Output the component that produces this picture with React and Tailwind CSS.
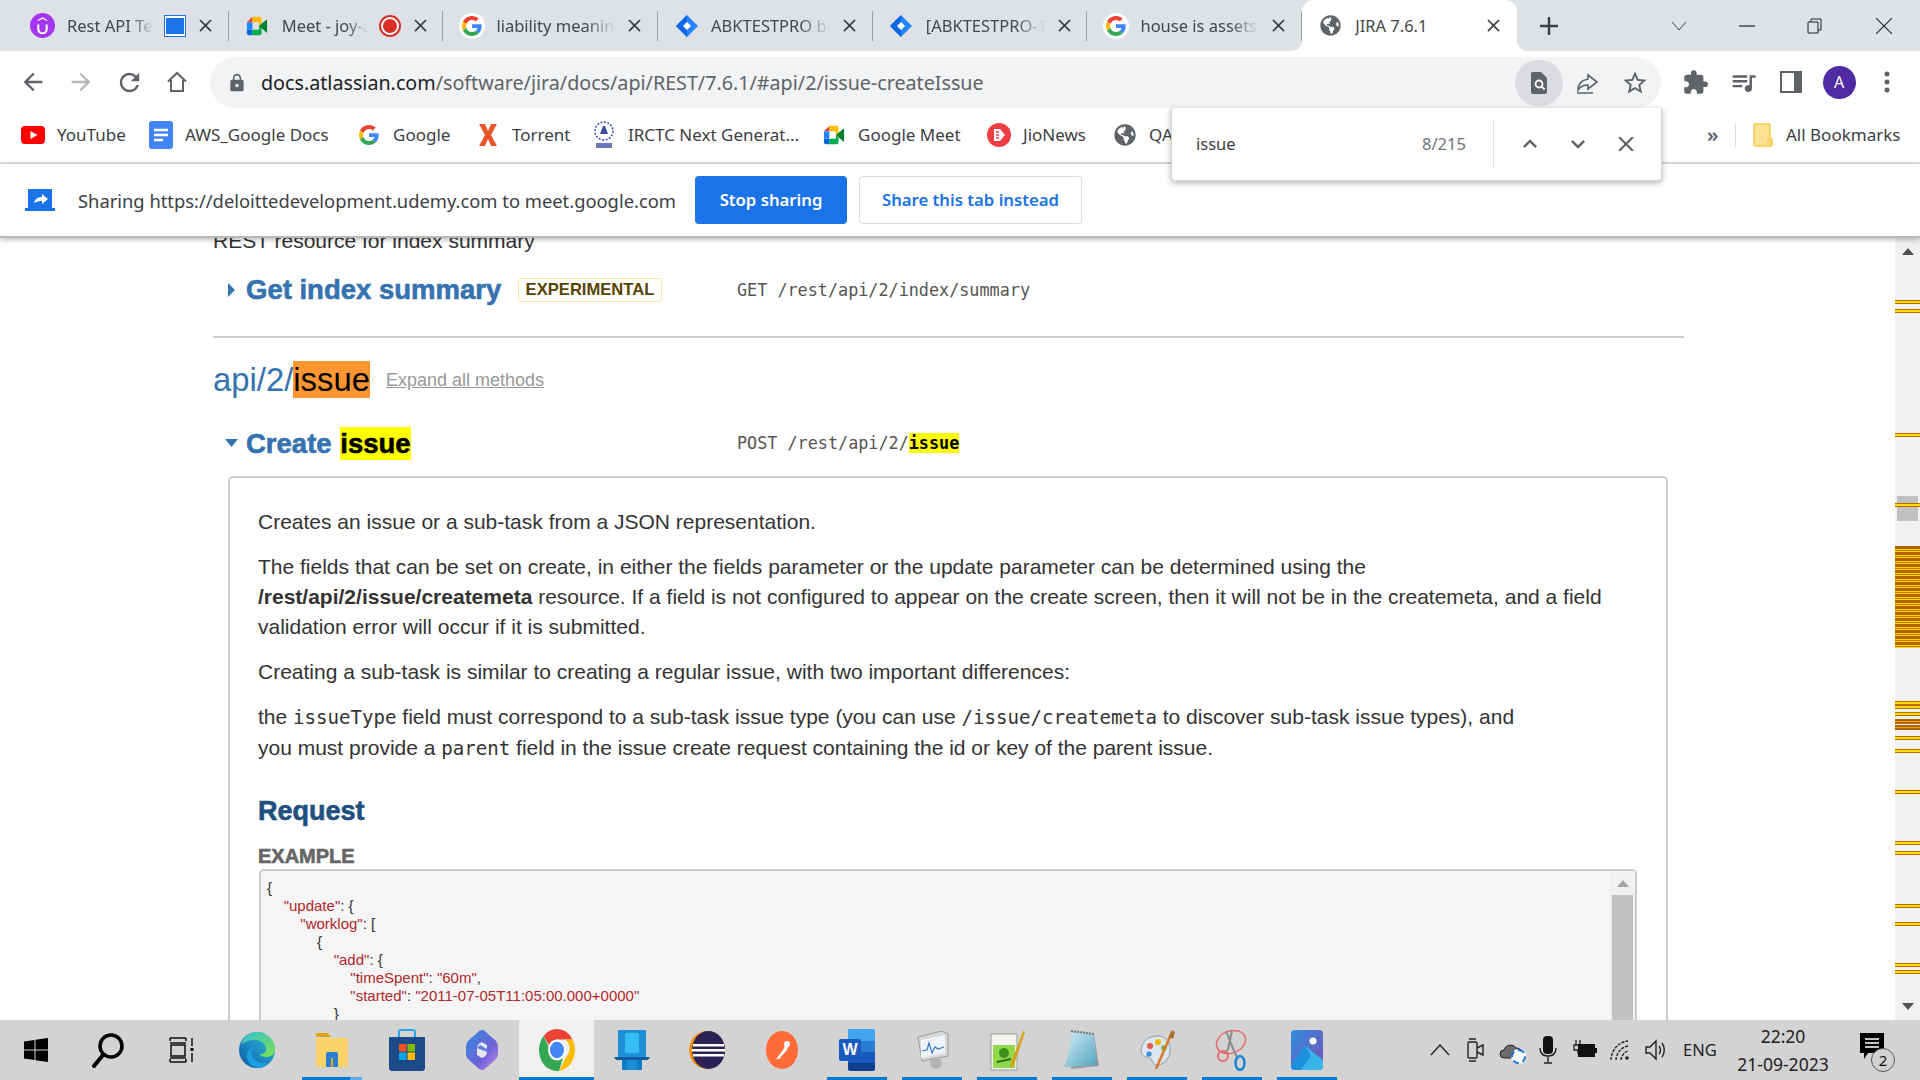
import React from 'react';
import { MdArrowBack, MdArrowForward, MdRefresh, MdLock, MdExtension, MdQueueMusic, MdClose, MdOutlineStarBorder, MdKeyboardArrowUp, MdKeyboardArrowDown } from 'react-icons/md';
import { FaGlobeAmericas } from 'react-icons/fa';

const GoogleG = ({ size = 20 }) => (
    <svg width={size} height={size} viewBox="0 0 48 48">
        <path fill="#EA4335" d="M24 9.5c3.54 0 6.71 1.22 9.21 3.6l6.85-6.85C35.9 2.38 30.47 0 24 0 14.62 0 6.51 5.38 2.56 13.22l7.98 6.19C12.43 13.72 17.74 9.5 24 9.5z" />
        <path fill="#4285F4" d="M46.98 24.55c0-1.57-.15-3.09-.38-4.55H24v9.02h12.94c-.58 2.96-2.26 5.48-4.78 7.18l7.73 6c4.51-4.18 7.09-10.36 7.09-17.65z" />
        <path fill="#FBBC05" d="M10.53 28.59c-.48-1.45-.76-2.99-.76-4.59s.27-3.14.76-4.59l-7.98-6.19C.92 16.46 0 20.12 0 24c0 3.88.92 7.54 2.56 10.78l7.97-6.19z" />
        <path fill="#34A853" d="M24 48c6.48 0 11.93-2.13 15.89-5.81l-7.73-6c-2.15 1.45-4.92 2.3-8.16 2.3-6.26 0-11.57-4.22-13.47-9.91l-7.98 6.19C6.51 42.62 14.62 48 24 48z" />
    </svg>
);
const GoogleTab = () => (
    <span className="flex h-[26px] w-[26px] items-center justify-center rounded-full bg-white"><GoogleG size={20} /></span>
);
const MeetIcon = ({ size = 22 }) => (
    <svg width={size} height={size} viewBox="0 0 24 24">
        <path fill="#ea4335" d="M7 2v6H1z" />
        <path fill="#2684fc" d="M1 8h6v8H1z" />
        <path fill="#0066da" d="M1 16h6v6H3a2 2 0 0 1-2-2z" />
        <path fill="#ffba00" d="M7 2h8a2 2 0 0 1 2 2v5l-3 3V8H7z" />
        <path fill="#00ac47" d="M7 16h7v-4l3 3v5a2 2 0 0 1-2 2H7z" />
        <path fill="#00832d" d="M14 12l9-7.5v15z" />
    </svg>
);
const JiraIcon = () => (
    <svg width="24" height="24" viewBox="0 0 24 24">
        <path fill="#2684ff" d="M12 1l11 11-11 11L1 12z" />
        <path fill="#0b66e4" d="M12 1v7l-4 4 4 4v7L1 12z" />
        <path fill="#fff" d="M12 8l4 4-4 4-4-4z" />
    </svg>
);
const UdemyIcon = () => (
    <svg width="25" height="25" viewBox="0 0 24 24">
        <circle cx="12" cy="12" r="12" fill="#a435f0" />
        <path d="M8 11v4.5a4 4 0 0 0 8 0V11" fill="none" stroke="#fff" strokeWidth="2" />
        <path d="M12 4l4.500 2.600v1.400L12 5.500 7.500 8V6.600z" fill="#fff" />
    </svg>
);
const Globe = ({ size = 20 }) => <FaGlobeAmericas size={size} color="#5f6368" />;
const YouTube = () => (
    <svg width="24" height="24" viewBox="0 0 24 24">
        <rect x="0" y="3" width="24" height="18" rx="4" fill="#f00" />
        <path d="M9.500 8l7 4-7 4z" fill="#fff" />
    </svg>
);
const DocsIcon = () => (
    <svg width="24" height="28" viewBox="0 0 24 28">
        <rect width="24" height="28" rx="3" fill="#4285f4" />
        <path d="M5 9h14M5 14h14M5 19h9" stroke="#fff" strokeWidth="2.600" />
    </svg>
);
const TorrentIcon = () => (
    <svg width="20" height="24" viewBox="0 0 20 24">
        <path fill="#e8552b" d="M1 1h6l3 7 3-7h6l-6 11 6 11h-6l-3-7-3 7H1l6-11z" />
    </svg>
);
const IrctcIcon = () => (
    <svg width="22" height="32" viewBox="0 0 22 32">
        <circle cx="11" cy="12" r="9" fill="none" stroke="#3b4ea0" strokeWidth="1.500" strokeDasharray="2 1.500" />
        <path d="M7 15l3-8 2 0 3 8z" fill="#3b4ea0" />
        <rect x="3" y="24" width="16" height="5" fill="#6b76b8" />
    </svg>
);
const JioNews = () => (
    <svg width="24" height="24" viewBox="0 0 24 24">
        <circle cx="12" cy="12" r="12" fill="#ef3e42" />
        <path d="M7 6h6l5 6-5 6H7z" fill="#fff" />
        <path d="M9 9h3M9 12h3M9 15h3" stroke="#ef3e42" strokeWidth="1.300" />
    </svg>
);
const Folder = () => (
    <svg width="20" height="24" viewBox="0 0 20 24">
        <path d="M1 2a1 1 0 0 1 1-1h14a1 1 0 0 1 1 1v14h2v6a1 1 0 0 1-1 1H2a1 1 0 0 1-1-1z" fill="#fde293" stroke="#f7cb4d" strokeWidth="1.500" />
        <path d="M15 23v-6a1 1 0 0 1 3 0v6" fill="none" stroke="#f7cb4d" strokeWidth="1.200" />
    </svg>
);

const tabs = [
    { title: 'Rest API Testing with Postman', icon: <UdemyIcon />, w: 'w-[86px]', extra: <span className="flex h-[22px] w-[23px] items-center justify-center border border-[#1a73e8] bg-white"><span className="h-[16px] w-[18px] bg-[#1a73e8]" /></span> },
    { title: 'Meet - joy-abc', icon: <MeetIcon />, w: 'w-[86px]', extra: <span className="flex h-[22px] w-[22px] items-center justify-center rounded-full border-2 border-[#d93025] bg-white"><span className="h-[14px] w-[14px] rounded-full bg-[#d93025]" /></span> },
    { title: 'liability meaning in accounting', icon: <GoogleTab />, w: 'w-[119px]' },
    { title: 'ABKTESTPRO board - Agile', icon: <JiraIcon />, w: 'w-[119px]' },
    { title: '[ABKTESTPRO-1] Create', icon: <JiraIcon />, w: 'w-[119px]' },
    { title: 'house is assets or liabilities', icon: <GoogleTab />, w: 'w-[119px]' },
    { title: 'JIRA 7.6.1', icon: <Globe size={21} />, w: 'w-[119px]', active: true },
];

function Tab({ tab }) {
    return (
        <div className={`relative flex h-[51px] w-[214.7px] shrink-0 items-center ${tab.active ? 'rounded-t-[12px] bg-white' : ''}`}>
            {tab.active && (
                <>
                    <svg className="absolute bottom-0 left-[-10px]" width="10" height="10" viewBox="0 0 10 10"><path d="M10 0v10H0a10 10 0 0 0 10-10z" fill="#fff" /></svg>
                    <svg className="absolute bottom-0 right-[-10px]" width="10" height="10" viewBox="0 0 10 10"><path d="M0 0v10h10A10 10 0 0 1 0 0z" fill="#fff" /></svg>
                </>
            )}
            <div className="flex w-[53px] shrink-0 justify-center pl-[4px]">{tab.icon}</div>
            <div className={`${tab.w} overflow-hidden whitespace-nowrap pt-[1px] text-[16.5px] text-[#45474a] ${tab.active ? '' : '[mask-image:linear-gradient(to_right,black_75%,transparent)]'}`}>{tab.title}</div>
            {tab.extra && <div className="ml-[11px] flex w-[22px] justify-center">{tab.extra}</div>}
            <MdClose size={21} color="#3c4043" className="absolute left-[181px] top-[15px]" />
            {!tab.active && <div className="absolute right-0 top-[11px] h-[30px] w-px bg-[#9aa0a6]" />}
        </div>
    );
}

const bookmarks = [
    { label: 'YouTube', icon: <YouTube />, w: 'w-[128px]' },
    { label: 'AWS_Google Docs', icon: <DocsIcon />, w: 'w-[208px]' },
    { label: 'Google', icon: <GoogleG size={20} />, w: 'w-[119px]' },
    { label: 'Torrent', icon: <TorrentIcon />, w: 'w-[116px]' },
    { label: 'IRCTC Next Generat...', icon: <IrctcIcon />, w: 'w-[230px]' },
    { label: 'Google Meet', icon: <MeetIcon />, w: 'w-[165px]' },
    { label: 'JioNews', icon: <JioNews />, w: 'w-[126px]' },
    { label: 'QA', icon: <Globe size={22} />, w: 'w-[60px]' },
];

function ToolbarIcon({ children, className = '' }) {
    return <div className={`flex h-[48px] w-[48px] items-center justify-center ${className}`}>{children}</div>;
}

function Toolbar() {
    return (
        <div className="flex h-[57px] items-end bg-white pl-[9px]">
            <div className="mb-[2px] flex">
                <ToolbarIcon><MdArrowBack size={28} color="#5f6368" /></ToolbarIcon>
                <ToolbarIcon><MdArrowForward size={28} color="#b5b7ba" /></ToolbarIcon>
                <ToolbarIcon><MdRefresh size={29} color="#5f6368" /></ToolbarIcon>
                <ToolbarIcon>
                    <svg width="24" height="24" viewBox="0 0 24 24" fill="none" stroke="#5f6368" strokeWidth="2"><path d="M3 11.500L12 3l9 8.500M6 10v11h12V10" /></svg>
                </ToolbarIcon>
            </div>
            <div className="ml-[9px] flex h-[51px] w-[1451px] items-center rounded-full bg-[#f1f3f4]">
                <MdLock size={20} color="#5f6368" className="ml-[17px]" />
                <div className="ml-[14px] text-[19.7px] text-[#5f6368]"><span className="text-[#202124]">docs.atlassian.com</span>/software/jira/docs/api/REST/7.6.1/#api/2/issue-createIssue</div>
                <div className="ml-auto mr-[2px] flex items-center">
                    <div className="flex h-[46px] w-[48px] items-center justify-center rounded-full bg-[#dadce0]">
                        <svg width="18" height="22" viewBox="0 0 18 22"><path d="M1 2a2 2 0 0 1 2-2h8l6 6v14a2 2 0 0 1-2 2H3a2 2 0 0 1-2-2z" fill="#5f6368" /><circle cx="9" cy="12" r="3.500" fill="none" stroke="#fff" strokeWidth="1.800" /><path d="M11.500 14.500l3 3" stroke="#fff" strokeWidth="1.800" /></svg>
                    </div>
                    <ToolbarIcon>
                        <svg width="24" height="24" viewBox="0 0 24 24" fill="none" stroke="#5f6368" strokeWidth="1.600"><path d="M13 4l9 7-9 7v-4c-5 0-8 2-10 5 0-6 4-10 10-11zM2 22h16" /></svg>
                    </ToolbarIcon>
                    <ToolbarIcon><MdOutlineStarBorder size={28} color="#5f6368" /></ToolbarIcon>
                </div>
            </div>
            <div className="mb-[2px] ml-[10px] flex items-center">
                <ToolbarIcon><MdExtension size={27} color="#5f6368" /></ToolbarIcon>
                <ToolbarIcon><MdQueueMusic size={29} color="#5f6368" /></ToolbarIcon>
                <ToolbarIcon>
                    <svg width="22" height="22" viewBox="0 0 22 22"><path d="M1 1h20v20H1z" fill="none" stroke="#5f6368" strokeWidth="2" /><path d="M14 1h7v20h-7z" fill="#5f6368" /></svg>
                </ToolbarIcon>
                <ToolbarIcon>
                    <div className="flex h-[33px] w-[33px] items-center justify-center rounded-full bg-[#4f2ba3] text-[16px] text-white">A</div>
                </ToolbarIcon>
                <ToolbarIcon>
                    <svg width="6" height="22" viewBox="0 0 6 22" fill="#5f6368"><circle cx="3" cy="3" r="2.500" /><circle cx="3" cy="11" r="2.500" /><circle cx="3" cy="19" r="2.500" /></svg>
                </ToolbarIcon>
            </div>
        </div>
    );
}

function Bookmarks() {
    return (
        <div className="flex h-[56px] items-center border-b-2 border-[#dadce0] bg-white pl-[21px] text-[17px] text-[#3c4043]">
            {bookmarks.map((b) => (
                <div key={b.label} className={`flex ${b.w} shrink-0 items-center`}>
                    <div className="flex w-[24px] justify-center">{b.icon}</div>
                    <span className="ml-[12px] whitespace-nowrap">{b.label}</span>
                </div>
            ))}
            <span className="ml-[534px] w-[22px] text-[20px] font-semibold text-[#5f6368]">»</span>
            <div className="ml-[6px] h-[24px] w-px bg-[#dadce0]" />
            <div className="ml-[17px]"><Folder /></div>
            <span className="ml-[13px] whitespace-nowrap">All Bookmarks</span>
        </div>
    );
}

function FindBar() {
    return (
        <div className="absolute left-[1171px] top-[108px] z-20 flex h-[73px] w-[491px] items-center rounded-b-[4px] border border-t-0 border-[#d5d5d5] bg-white text-[16.5px] shadow-[0_2px_6px_rgba(0,0,0,0.3)]">
            <span className="ml-[24px] w-[226px] text-[#3c4043]">issue</span>
            <span className="w-[47px] text-[#70757a]">8/215</span>
            <div className="ml-[24px] h-[48px] w-px bg-[#e3e3e3]" />
            <div className="ml-[12px] flex">
                <ToolbarIcon><MdKeyboardArrowUp size={28} color="#5f6368" /></ToolbarIcon>
                <ToolbarIcon><MdKeyboardArrowDown size={28} color="#5f6368" /></ToolbarIcon>
                <ToolbarIcon><MdClose size={26} color="#5f6368" /></ToolbarIcon>
            </div>
        </div>
    );
}

function Infobar() {
    return (
        <div className="z-10 flex h-[74px] items-center border-b-2 border-[#b9b9b9] bg-white pl-[25px] text-[18.35px] shadow-[0_2px_5px_rgba(0,0,0,0.25)]">
            <svg width="30" height="22" viewBox="0 0 30 22">
                <path d="M3 0h24v19H3z" fill="#1a73e8" />
                <path d="M0 19h30v3H0z" fill="#1a73e8" />
                <path d="M9 14c1-4 4-6 8-6V5l6 5-6 5v-3c-3 0-5 .500-8 2z" fill="#fff" />
            </svg>
            <span className="ml-[23px] w-[617px] whitespace-nowrap pt-[1px] text-[#3c4043]">Sharing https://deloittedevelopment.udemy.com to meet.google.com</span>
            <div className="flex h-[48px] w-[152px] items-center justify-center rounded-[4px] bg-[#1a73e8] text-[16.7px] font-semibold text-white">Stop sharing</div>
            <div className="ml-[12px] flex h-[48px] w-[223px] items-center justify-center rounded-[4px] border border-[#dadce0] text-[16.7px] font-semibold text-[#1a73e8]">Share this tab instead</div>
        </div>
    );
}

const ticks = [299, 308, 432, 502, 700, 704, 711, 735, 748, 789, 840, 850, 903, 921, 962, 969];
const heavyTicks = [718, 724];

function PageScrollbar() {
    return (
        <div className="relative flex w-[25px] shrink-0 flex-col items-center justify-between bg-[#f1f1f1] pb-[10px] pt-[10px]">
            <svg width="12" height="7" viewBox="0 0 12 7"><path d="M6 0l6 7H0z" fill="#505050" /></svg>
            <svg width="12" height="7" viewBox="0 0 12 7"><path d="M0 0h12L6 7z" fill="#505050" /></svg>
            <div className="absolute left-[2px] top-[258px] h-[25px] w-[21px] bg-[#c1c1c1]" />
            {ticks.map((y) => (
                <div key={y} className="absolute left-0 h-[4px] w-full border-y border-[#bd6a00] bg-[#ffdd00]" style={{ top: y - 237 }} />
            ))}
            {heavyTicks.map((y) => (
                <div key={y} className="absolute left-0 h-[5px] w-full border-y-2 border-[#b36200] bg-[#e8a800]" style={{ top: y - 237 }} />
            ))}
            <div className="absolute left-0 top-[308px] h-[102px] w-full bg-[repeating-linear-gradient(to_bottom,#b36200_0px,#b36200_3px,#ffd800_3px,#ffd800_4px,#c87400_4px,#c87400_5px,#ffd800_5px,#ffd800_6px)]" />
        </div>
    );
}

const Str = ({ children }) => <span className="text-[#b0282c]">{children}</span>;
const Mono = ({ children }) => <code className="font-['DejaVu_Sans_Mono',monospace] text-[19.1px] font-normal text-[#333]">{children}</code>;

function CodeBox() {
    return (
        <div className="ml-px flex h-[300px] w-[1378px] rounded-[5px] border-2 border-[#cccccc] bg-[#f5f5f5]">
            <pre className="flex-1 pl-[6px] pt-[8px] font-['Liberation_Sans',sans-serif] text-[15px] leading-[18px] text-[#333]">
                {'{\n    '}<Str>"update"</Str>{': {\n        '}<Str>"worklog"</Str>{': [\n            {\n                '}<Str>"add"</Str>{': {\n                    '}<Str>"timeSpent"</Str>{': '}<Str>"60m"</Str>{',\n                    '}<Str>"started"</Str>{': '}<Str>"2011-07-05T11:05:00.000+0000"</Str>{'\n                }'}
            </pre>
            <div className="flex w-[25px] flex-col items-center bg-[#f1f1f1]">
                <svg className="mt-[9px]" width="12" height="7" viewBox="0 0 12 7"><path d="M6 0l6 7H0z" fill="#a3a3a3" /></svg>
                <div className="mt-[8px] h-[260px] w-[21px] bg-[#c1c1c1]" />
            </div>
        </div>
    );
}

function Content() {
    return (
        <div className="min-w-0 flex-1 overflow-hidden">
            <div className="-mt-[12px] ml-[213px] w-[1471px] font-['Liberation_Sans',sans-serif] text-[21px] leading-[30px] text-[#333]">
                <div className="h-[30px]">REST resource for index summary</div>
                <div className="mt-[17px] flex h-[34px] items-center">
                    <svg className="ml-[14px] w-[9px]" width="9" height="14" viewBox="0 0 9 14"><path d="M1 0l7 7-7 7z" fill="#3572b0" /></svg>
                    <span className="ml-[10px] w-[272px] text-[27.5px] font-bold text-[#3572b0] [-webkit-text-stroke:0.6px]">Get index summary</span>
                    <span className="flex h-[24px] w-[144px] items-center justify-center rounded-[3px] border border-[#ffe7a3] text-[16.6px] font-bold leading-none text-[#594300]">EXPERIMENTAL</span>
                    <span className="ml-[75px] font-['DejaVu_Sans_Mono',monospace] text-[16.8px] text-[#555]">GET /rest/api/2/index/summary</span>
                </div>
                <div className="mt-[29px] h-[2px] bg-[#cccccc]" />
                <div className="mt-[23px] flex h-[38px] items-center">
                    <span className="text-[32.85px] leading-[38px] text-[#3572b0]">api/2/<span className="bg-[#ff9632] text-black">issue</span></span>
                    <span className="ml-[16px] text-[18px] text-[#999] underline">Expand all methods</span>
                </div>
                <div className="mt-[27px] flex h-[34px] items-center">
                    <svg className="ml-[12px]" width="13" height="8" viewBox="0 0 13 8"><path d="M0 0h13L6.500 8z" fill="#3572b0" /></svg>
                    <span className="ml-[8px] w-[491px] whitespace-pre text-[27.5px] font-bold leading-[33px] text-[#3572b0] [-webkit-text-stroke:0.6px]">Create <span className="ml-[1px] inline-block h-[33px] bg-[#ffff00] text-black">issue</span></span>
                    <span className="font-['DejaVu_Sans_Mono',monospace] text-[16.8px] text-[#555]">POST /rest/api/2/<span className="bg-[#ffff00] font-bold text-black">issue</span></span>
                </div>
                <div className="ml-[15px] mt-[16px] h-[700px] w-[1440px] rounded-t-[5px] border-2 border-[#cccccc] pl-[28px] pt-[29px]">
                    <p>Creates an issue or a sub-task from a JSON representation.</p>
                    <p className="mt-[15px] w-[1360px]">The fields that can be set on create, in either the fields parameter or the update parameter can be determined using the <b>/rest/api/2/issue/createmeta</b> resource. If a field is not configured to appear on the create screen, then it will not be in the createmeta, and a field validation error will occur if it is submitted.</p>
                    <p className="mt-[15px]">Creating a sub-task is similar to creating a regular issue, with two important differences:</p>
                    <p className="mt-[15px] w-[1275px]">the <Mono>issueType</Mono> field must correspond to a sub-task issue type (you can use <Mono>/issue/createmeta</Mono> to discover sub-task issue types), and you must provide a <Mono>parent</Mono> field in the issue create request containing the id or key of the parent issue.</p>
                    <div className="mt-[30px] h-[34px] text-[27px] font-bold leading-[34px] text-[#205081] [-webkit-text-stroke:0.6px]">Request</div>
                    <div className="mt-[13px] h-[28px] text-[20px] font-bold leading-[30px] text-[#666] [-webkit-text-stroke:0.6px]">EXAMPLE</div>
                    <CodeBox />
                </div>
            </div>
        </div>
    );
}

/* taskbar icons */
const Bar = ({ children, on, active, half }) => (
    <div className={`relative flex h-[60px] w-[75px] shrink-0 items-center justify-center ${active ? 'bg-[#f0f0f0]' : ''}`}>
        {children}
        {on && <div className={`absolute bottom-0 h-[3px] ${active ? 'left-0 w-full' : 'left-[8px] w-[60px]'} bg-[#0078d4]`} />}
        {half && <div className="absolute bottom-0 left-[56px] h-[3px] w-[12px] bg-[#5ea9e6]" />}
    </div>
);

const WinLogo = () => (
    <svg width="24" height="24" viewBox="0 0 24 24" fill="#000"><path d="M0 3.500l10.500-1.500v9.500H0zM11.500 1.800L24 0v11.500H11.500zM0 12.500h10.500V22L0 20.500zM11.500 12.500H24V24l-12.500-1.800z" /></svg>
);
const SearchIco = () => (
    <svg width="34" height="36" viewBox="0 0 34 36" fill="none" stroke="#000" strokeWidth="3.500"><circle cx="20" cy="14" r="11" /><path d="M12 23L3 34" strokeWidth="4" strokeLinecap="round" /></svg>
);
const TaskView = () => (
    <svg width="26" height="26" viewBox="0 0 26 26" fill="none" stroke="#111" strokeWidth="1.500"><path d="M1 1h16M1 25h16M1 6h16M1 21h16M2 8v11h14V8zM1 1v3M17 1v3M1 25v-3M17 25v-3M23 1v8M23 16v9" /><rect x="21.500" y="11" width="3" height="3" fill="#111" stroke="none" /></svg>
);
const Edge = () => (
    <svg width="36" height="36" viewBox="0 0 36 36">
        <defs>
            <linearGradient id="edge1" x1="0" y1="1" x2="1" y2="0"><stop offset="0" stopColor="#0c59a4" /><stop offset="1" stopColor="#2fc2df" /></linearGradient>
            <linearGradient id="edge2" x1="0" y1="0" x2="1" y2="1"><stop offset="0" stopColor="#36c1d8" /><stop offset="1" stopColor="#7ee04f" /></linearGradient>
        </defs>
        <circle cx="18" cy="18" r="18" fill="url(#edge1)" />
        <path d="M2 13C5 4 12 0 18 0c10 0 18 8 18 17 0 6-5 8-9 8-3 0-6-1-6-3 4 0 6-2 6-5 0-5-5-9-11-9C10 8 4 10 2 13z" fill="url(#edge2)" />
        <path d="M21 36c-9 0-14-7-13-14 1-4 4-7 8-8-3 3-4 6-3 10 2 5 8 8 15 7-2 3-4 5-7 5z" fill="#1b9de2" />
    </svg>
);
const Explorer = () => (
    <svg width="32" height="34" viewBox="0 0 32 34">
        <path d="M0 2a2 2 0 0 1 2-2h10l3 4h-15z" fill="#e0a60e" />
        <path d="M0 5h32v27a2 2 0 0 1-2 2H2a2 2 0 0 1-2-2z" fill="#fcd368" />
        <path d="M10 34V21a2 2 0 0 1 2-2h8a2 2 0 0 1 2 2v13h-5v-9h-2v9z" fill="#2a7fcf" />
        <rect x="15" y="25" width="2" height="9" fill="#e5a910" />
    </svg>
);
const Store = () => (
    <svg width="36" height="42" viewBox="0 0 36 42">
        <path d="M10 8V3a2 2 0 0 1 2-2h12a2 2 0 0 1 2 2v5" fill="none" stroke="#2aa5e8" strokeWidth="2" />
        <path d="M0 8h36v31a3 3 0 0 1-3 3H3a3 3 0 0 1-3-3z" fill="#1b4a86" />
        <path d="M10 15h7.500v7.500H10z" fill="#f25022" /><path d="M18.500 15H26v7.500h-7.500z" fill="#7fba00" />
        <path d="M10 23.500h7.500V31H10z" fill="#00a4ef" /><path d="M18.500 23.500H26V31h-7.500z" fill="#ffb900" />
    </svg>
);
const Copilot = () => (
    <svg width="32" height="40" viewBox="0 0 32 40">
        <defs>
            <linearGradient id="cop1" x1="0" y1="0" x2="1" y2="1"><stop offset="0" stopColor="#2f8be0" /><stop offset="0.6" stopColor="#6d62d8" /><stop offset="1" stopColor="#c48be8" /></linearGradient>
        </defs>
        <path d="M16 0c2 0 3 1 5 3l8 7c2 2 3 4 3 7v6c0 3-1 5-3 7l-8 7c-2 2-3 3-5 3s-3-1-5-3l-8-7c-2-2-3-4-3-7v-6c0-3 1-5 3-7l8-7c2-2 3-3 5-3z" fill="url(#cop1)" />
        <path d="M11 18c0-3 2-5 5-6l5 3v7c0 3-2 5-5 6l-5-3z" fill="#e6e6f2" />
        <path d="M11 18l10 4v-3l-7-4z" fill="#5a7fd8" />
    </svg>
);
const Chrome = () => (
    <svg width="36" height="42" viewBox="0 0 36 36" preserveAspectRatio="none">
        <path d="M18 0a18 18 0 0 1 15.600 9H18a9 9 0 0 0-8 5L4.600 6A18 18 0 0 1 18 0z" fill="#ea4335" />
        <path d="M33.600 9A18 18 0 0 1 20 35.900L27 24a9 9 0 0 0-1-15z" fill="#fbbc04" />
        <path d="M20 35.900A18 18 0 0 1 4.600 6L11 17.500A9 9 0 0 0 24 25z" fill="#34a853" />
        <circle cx="18" cy="18" r="9" fill="#fff" /><circle cx="18" cy="18" r="7" fill="#4285f4" />
    </svg>
);
const BlueApp = () => (
    <svg width="36" height="40" viewBox="0 0 36 40">
        <path d="M4 0h28v28H4z" fill="#1c8fd8" />
        <path d="M11 5a2 2 0 0 1 2-2h10a2 2 0 0 1 2 2v18H11z" fill="#35bdf2" />
        <path d="M0 27h36l-2 3H2z" fill="#0f5f9e" />
        <path d="M8 30h20v10H8z" fill="#0f7cc4" />
        <path d="M13 30h10v10H13z" fill="#1c8fd8" />
    </svg>
);
const Eclipse = () => (
    <svg width="36" height="38" viewBox="0 0 36 38">
        <ellipse cx="18" cy="19" rx="18" ry="19" fill="#f29111" />
        <ellipse cx="19.500" cy="19" rx="16.500" ry="19" fill="#2c2255" />
        <path d="M4 13h31v2.500H4zM3 18h33v2.500H3zM4 23h31v2.500H4z" fill="#fff" />
    </svg>
);
const Postman = () => (
    <svg width="32" height="38" viewBox="0 0 32 38">
        <ellipse cx="16" cy="19" rx="16" ry="19" fill="#ff6c37" />
        <path d="M10 28l7-9 3-6 3 1-2 5-8 9z" fill="#fff" />
        <circle cx="21" cy="13" r="3" fill="#fff" />
    </svg>
);
const Word = () => (
    <svg width="36" height="42" viewBox="0 0 36 42">
        <path d="M9 0h25a2 2 0 0 1 2 2v10H9z" fill="#41a5ee" />
        <path d="M9 12h27v11H9z" fill="#2b7cd3" />
        <path d="M9 23h27v11H9z" fill="#185abd" />
        <path d="M9 34h27v6a2 2 0 0 1-2 2H11a2 2 0 0 1-2-2z" fill="#103f91" />
        <rect x="0" y="10" width="22" height="22" rx="2" fill="#185abd" />
        <text x="11" y="26" textAnchor="middle" fill="#fff" fontFamily="Liberation Sans" fontWeight="700" fontSize="16">W</text>
    </svg>
);
const Perfmon = () => (
    <svg width="36" height="38" viewBox="0 0 36 38">
        <path d="M4 6l24-6 6 3v22L8 30z" fill="#d9d9d9" stroke="#9a9a9a" />
        <path d="M7 9l24-5v18L7 27z" fill="#eef4fa" />
        <path d="M8 20l5-1 2-7 3 10 3-6 3 2 6-2" fill="none" stroke="#3478c0" strokeWidth="1.200" />
        <circle cx="22" cy="32" r="6" fill="#b5b5b5" />
    </svg>
);
const NotepadPP = () => (
    <svg width="36" height="42" viewBox="0 0 36 42">
        <path d="M2 5h26v36H2z" fill="#f5f5ef" stroke="#999" />
        <path d="M4 16h22v23H4z" fill="#8fd94a" />
        <circle cx="15" cy="24" r="5" fill="#3f8f1d" /><path d="M8 33l14-3" stroke="#2e6e14" strokeWidth="2" />
        <path d="M22 34L34 2l2 1-11 33-4 3z" fill="#d9a21b" />
    </svg>
);
const Notepad = () => (
    <svg width="36" height="40" viewBox="0 0 36 40">
        <defs><linearGradient id="npad" x1="0" y1="0" x2="1" y2="1"><stop offset="0" stopColor="#d5eef7" /><stop offset="1" stopColor="#4fa3bd" /></linearGradient></defs>
        <path d="M8 2l22 2 5 32-28 3c1-10 3-28 1-37z" fill="#9a9a9a" />
        <path d="M7 2l23 2 3 31L0 37C5 26 8 12 7 2z" fill="url(#npad)" />
        <path d="M7 1l23 3" stroke="#777" strokeWidth="2" strokeDasharray="2 1" />
    </svg>
);
const Paint = () => (
    <svg width="36" height="42" viewBox="0 0 36 42">
        <path d="M2 22C2 12 11 6 20 7c8 1 12 8 11 16-1 7-6 13-13 13-5 0-4-5-7-7-3-2-9 0-9-7z" fill="#dce4ec" stroke="#8a9aa8" />
        <circle cx="11" cy="17" r="3" fill="#e2574c" /><circle cx="19" cy="13" r="3" fill="#f4b400" /><circle cx="25" cy="19" r="2.800" fill="#6bb64a" /><circle cx="10" cy="25" r="2.600" fill="#3b8de0" />
        <path d="M33 3L17 40" stroke="#d97a2b" strokeWidth="2.500" />
        <path d="M30 8l3-7 3 2-2 7z" fill="#a5713a" />
    </svg>
);
const Snip = () => (
    <svg width="36" height="42" viewBox="0 0 36 42" fill="none">
        <ellipse cx="17" cy="13" rx="15" ry="11" stroke="#e86a6a" strokeWidth="1.500" transform="rotate(-20 17 13)" />
        <path d="M12 2l8 20 4 8M18 2l-4 18-3 4" stroke="#8a8a8a" strokeWidth="2" />
        <circle cx="9" cy="27" r="5" stroke="#e86a6a" strokeWidth="2" />
        <ellipse cx="26" cy="34" rx="4.500" ry="7" stroke="#1b88d4" strokeWidth="2.500" />
    </svg>
);
const Photos = () => (
    <svg width="32" height="40" viewBox="0 0 32 40">
        <defs><linearGradient id="ph1" x1="0" y1="0" x2="1" y2="1"><stop offset="0" stopColor="#2f8fe0" /><stop offset="1" stopColor="#7a4fb5" /></linearGradient></defs>
        <rect width="32" height="40" rx="4" fill="url(#ph1)" />
        <path d="M0 36l14-20 18 14v6a4 4 0 0 1-4 4H4a4 4 0 0 1-4-4z" fill="#38b6ea" />
        <path d="M0 36l14-20 6 10-10 14H4a4 4 0 0 1-4-4z" fill="#1f8fe0" />
        <circle cx="22" cy="11" r="3.500" fill="#fff" />
    </svg>
);

function Tray() {
    const s = { fill: 'none', stroke: '#222', strokeWidth: 1.4 };
    return (
        <div className="flex items-center">
            <div className="flex w-[36px] justify-center"><svg width="20" height="12" viewBox="0 0 20 12" {...s}><path d="M1 11l9-10 9 10" /></svg></div>
            <div className="flex w-[36px] justify-center"><svg width="18" height="24" viewBox="0 0 18 24" {...s}><rect x="1" y="4" width="9" height="16" rx="1" /><path d="M10 10l6-3v10l-6-3M2 1h7M2 23h7" /></svg></div>
            <div className="relative flex w-[36px] justify-center">
                <svg width="26" height="20" viewBox="0 0 26 20"><path d="M5 18a4 4 0 0 1 0-8c1-5 9-7 12-2 4 0 7 3 6 7l-1 3z" fill="#6a6a6a" stroke="#222" /></svg>
                <span className="absolute left-[17px] top-[9px] h-[15px] w-[15px] rounded-full border-2 border-dashed border-[#1a73e8] bg-white" />
            </div>
            <div className="flex w-[36px] justify-center"><svg width="18" height="28" viewBox="0 0 18 28"><rect x="4" y="0" width="10" height="18" rx="4" fill="#111" /><path d="M1 12c0 5 3 8 8 8s8-3 8-8M9 20v6M5 27h8" fill="none" stroke="#222" strokeWidth="1.400" /></svg></div>
            <div className="flex w-[36px] justify-center"><svg width="26" height="22" viewBox="0 0 26 22"><path d="M5 1v5M9 1v5M3 6h8v5H3zM7 11v4" fill="none" stroke="#222" strokeWidth="1.300" /><rect x="7" y="5" width="17" height="13" fill="#111" /><rect x="24" y="9" width="2" height="5" fill="#111" /></svg></div>
            <div className="flex w-[36px] justify-center"><svg width="24" height="24" viewBox="0 0 24 24" {...s}><path d="M3 22c0-9 7-18 17-19M8 22c0-6 5-13 12-14M13 22c0-3 3-8 7-9" strokeDasharray="3 1.200" /><circle cx="19" cy="20" r="1.800" fill="#222" stroke="none" /></svg></div>
            <div className="flex w-[36px] justify-center"><svg width="24" height="24" viewBox="0 0 24 24" {...s}><path d="M2 9h4l6-6v18l-6-6H2zM15 8c2 2 2 6 0 8M18 5c3 4 3 10 0 14" /></svg></div>
            <span className="ml-[9px] w-[36px] text-[16.5px] text-[#222]">ENG</span>
            <div className="ml-[14px] flex w-[100px] flex-col items-center text-[17.5px] leading-[28px] text-[#222]">
                <span>22:20</span>
                <span>21-09-2023</span>
            </div>
            <div className="relative ml-[27px] mr-[36px] h-[34px] w-[24px]">
                <svg width="24" height="28" viewBox="0 0 24 28"><path d="M0 0h24v20H8l-4 6v-6H0z" fill="#000" /><path d="M5 6h14M5 10h14M5 14h14" stroke="#fff" strokeWidth="1.300" /></svg>
                <span className="absolute left-[11px] top-[15px] flex h-[24px] w-[24px] items-center justify-center rounded-full border border-[#555] bg-[#d3d2d3] text-[15px] text-[#111]">2</span>
            </div>
        </div>
    );
}

function Taskbar() {
    return (
        <div className="flex h-[60px] shrink-0 items-center justify-between bg-[#d4d3d4]">
            <div className="flex items-center">
                <div className="flex h-[60px] w-[72px] items-center justify-center"><WinLogo /></div>
                <div className="flex h-[60px] w-[72px] items-center justify-center"><SearchIco /></div>
                <div className="flex h-[60px] w-[75px] items-center justify-center"><TaskView /></div>
                <Bar><Edge /></Bar>
                <Bar on half><Explorer /></Bar>
                <Bar><Store /></Bar>
                <Bar><Copilot /></Bar>
                <Bar on active><Chrome /></Bar>
                <Bar><BlueApp /></Bar>
                <Bar><Eclipse /></Bar>
                <Bar><Postman /></Bar>
                <Bar on><Word /></Bar>
                <Bar on><Perfmon /></Bar>
                <Bar on><NotepadPP /></Bar>
                <Bar on><Notepad /></Bar>
                <Bar on><Paint /></Bar>
                <Bar on><Snip /></Bar>
                <Bar on><Photos /></Bar>
            </div>
            <Tray />
        </div>
    );
}

export default function App() {
    return (
        <div className="relative flex h-[1080px] w-[1920px] flex-col overflow-hidden bg-white font-['Noto_Sans',sans-serif]">
            <div className="flex h-[51px] shrink-0 items-center bg-[#dee1e6] pl-[14px]">
                {tabs.map((t) => <Tab key={t.title} tab={t} />)}
                <svg className="ml-[22px]" width="20" height="20" viewBox="0 0 20 20"><path d="M10 1v18M1 10h18" stroke="#3c4043" strokeWidth="2.400" /></svg>
                <svg className="ml-[112px]" width="16" height="10" viewBox="0 0 16 10"><path d="M1 1l7 8 7-8" fill="none" stroke="#3c4043" /></svg>
                <svg className="ml-[52px]" width="16" height="2" viewBox="0 0 16 2"><path d="M0 1h16" stroke="#222" strokeWidth="1.200" /></svg>
                <svg className="ml-[52px]" width="16" height="16" viewBox="0 0 16 16" fill="none" stroke="#222"><path d="M1 4h10v11H1zM4 4V1h10v11h-3" /></svg>
                <svg className="ml-[53px]" width="16" height="16" viewBox="0 0 16 16"><path d="M0 0l16 16M16 0L0 16" stroke="#222" strokeWidth="1.100" /></svg>
            </div>
            <Toolbar />
            <Bookmarks />
            <Infobar />
            <FindBar />
            <div className="flex min-h-0 flex-1">
                <Content />
                <PageScrollbar />
            </div>
            <Taskbar />
        </div>
    );
}
